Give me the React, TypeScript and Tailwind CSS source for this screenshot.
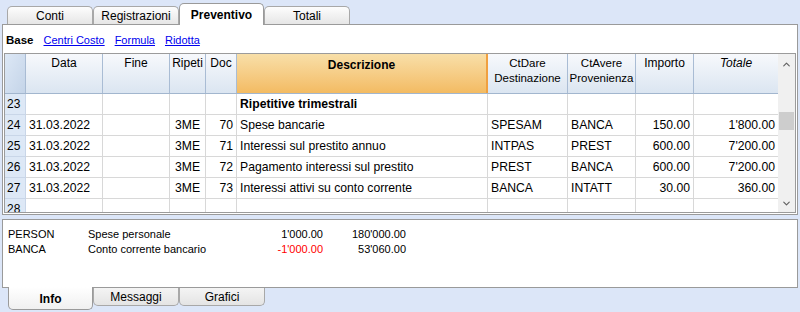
import { ChevronUp, ChevronDown } from 'lucide-react';

const cols = 'grid grid-cols-[21px_77px_67px_36px_31px_251px_80px_68px_58px_85px]';

const rows = [
    { n: '23', data: '', rip: '', doc: '', desc: 'Ripetitive trimestrali', bold: true, dare: '', avere: '', imp: '', tot: '' },
    { n: '24', data: '31.03.2022', rip: '3ME', doc: '70', desc: 'Spese bancarie', dare: 'SPESAM', avere: 'BANCA', imp: '150.00', tot: "1'800.00" },
    { n: '25', data: '31.03.2022', rip: '3ME', doc: '71', desc: 'Interessi sul prestito annuo', dare: 'INTPAS', avere: 'PREST', imp: '600.00', tot: "7'200.00" },
    { n: '26', data: '31.03.2022', rip: '3ME', doc: '72', desc: 'Pagamento interessi sul prestito', dare: 'PREST', avere: 'BANCA', imp: '600.00', tot: "7'200.00" },
    { n: '27', data: '31.03.2022', rip: '3ME', doc: '73', desc: 'Interessi attivi su conto corrente', dare: 'BANCA', avere: 'INTATT', imp: '30.00', tot: '360.00' },
    { n: '28', data: '', rip: '', doc: '', desc: '', dare: '', avere: '', imp: '', tot: '' },
];

function TopTab({ label, active }: { label: string; active?: boolean }) {
    if (active) {
        return (
            <div className="relative z-10 -mb-px h-[22px] w-[85px] rounded-t-[5px] border border-b-0 border-[#9a9a9a] bg-white flex items-center justify-center font-bold text-[12px] text-black">
                {label}
            </div>
        );
    }
    return (
        <div className="h-[18px] w-[86px] rounded-t-[5px] border border-b-0 border-[#a8a8a8] bg-gradient-to-b from-[#fdfdfd] to-[#e6e6e6] flex items-center justify-center text-[12px] text-black">
            {label}
        </div>
    );
}

function BottomTab({ label, active }: { label: string; active?: boolean }) {
    if (active) {
        return (
            <div className="relative z-10 -mt-px h-[23px] w-[85px] rounded-b-[5px] border border-t-0 border-[#9a9a9a] bg-gradient-to-b from-white to-[#f0f0f0] flex items-center justify-center pt-[2px] font-bold text-[12px] text-black">
                {label}
            </div>
        );
    }
    return (
        <div className="h-[18px] w-[86px] rounded-b-[5px] border border-t-0 border-[#a8a8a8] bg-gradient-to-b from-[#f4f4f4] to-[#e4e4e4] flex items-center justify-center text-[12px] text-black">
            {label}
        </div>
    );
}

export default function App() {
    const cell = 'border-r border-b border-[#d8d8d8] px-[3px] flex items-center whitespace-nowrap overflow-hidden';
    const hdr = 'border-r border-[#a9bcd4] flex justify-center text-center pt-[2px] leading-[15px] bg-gradient-to-b from-[#f7f9fc] to-[#dbe5f1]';

    return (
        <div className="w-[800px] h-[312px] bg-[#dce6f8] flex flex-col overflow-hidden font-['Liberation_Sans',Arial,sans-serif] text-black">
            {/* top tabs */}
            <div className="h-[24px] shrink-0 pl-[7px] flex items-end">
                <TopTab label="Conti" />
                <TopTab label="Registrazioni" />
                <TopTab label="Preventivo" active />
                <TopTab label="Totali" />
            </div>

            {/* main panel */}
            <div className="mx-[2px] h-[191px] shrink-0 border border-[#9a9a9a] bg-white flex flex-col">
                <div className="h-[28px] shrink-0 flex items-center pl-[3px] pt-[3px] text-[11px]">
                    <span className="font-bold text-[11.5px]">Base</span>
                    <span className="ml-[10px] text-[#0000ee] underline">Centri Costo</span>
                    <span className="ml-[10px] text-[#0000ee] underline">Formula</span>
                    <span className="ml-[10px] text-[#0000ee] underline">Ridotta</span>
                </div>

                <div className="ml-px mr-px h-[160px] shrink-0 border border-[#9b9b9b] flex overflow-hidden">
                    <div className="flex-1 flex flex-col overflow-hidden">
                        {/* header */}
                        <div className={`${cols} h-[40px] shrink-0 border-b border-[#a2b6ce] text-[12px]`}>
                            <div className="border-r border-[#a9bcd4] bg-gradient-to-br from-[#dde8f6] to-[#c4d4e8]" />
                            <div className={hdr}>Data</div>
                            <div className={hdr}>Fine</div>
                            <div className={hdr}>Ripeti</div>
                            <div className={hdr}>Doc</div>
                            <div className="border-r-2 border-[#f0a040] flex justify-center pt-[2px] font-bold bg-gradient-to-b from-[#f8dfa8] to-[#f3bb62]">
                                Descrizione
                            </div>
                            <div className={`${hdr} text-[11.5px]`}>CtDare<br />Destinazione</div>
                            <div className={`${hdr} text-[11.5px]`}>CtAvere<br />Provenienza</div>
                            <div className={hdr}>Importo</div>
                            <div className={`${hdr} italic`}>Totale</div>
                        </div>

                        {rows.map((r) => (
                            <div key={r.n} className={`${cols} h-[21px] shrink-0 text-[12.2px]`}>
                                <div className="bg-[#dde8f6] border-r border-b border-[#c9d6e8] flex items-center pl-[2px] text-[12px]">{r.n}</div>
                                <div className={cell}>{r.data}</div>
                                <div className={cell}></div>
                                <div className={`${cell} justify-center`}>{r.rip}</div>
                                <div className={`${cell} justify-end`}>{r.doc}</div>
                                <div className={`${cell} ${r.bold ? 'font-bold' : ''}`}>{r.desc}</div>
                                <div className={cell}>{r.dare}</div>
                                <div className={cell}>{r.avere}</div>
                                <div className={`${cell} justify-end`}>{r.imp}</div>
                                <div className={`${cell} justify-end`}>{r.tot}</div>
                            </div>
                        ))}
                    </div>

                    {/* scrollbar */}
                    <div className="w-[17px] shrink-0 bg-[#f0f0f0] flex flex-col items-center">
                        <ChevronUp size={11} strokeWidth={2.5} className="mt-[5px] text-[#606060]" />
                        <div className="mt-[42px] w-[15px] h-[18px] bg-[#cdcdcd]" />
                        <div className="flex-1" />
                        <ChevronDown size={11} strokeWidth={2.5} className="mb-[3px] text-[#606060]" />
                    </div>
                </div>
            </div>

            {/* lower panel */}
            <div className="mt-[4px] mx-[2px] h-[69px] shrink-0 border border-[#9a9a9a] bg-white pt-[7px] text-[11px] leading-[15px]">
                <div className="flex">
                    <span className="w-[85px] pl-[5px]">PERSON</span>
                    <span className="w-[149px]">Spese personale</span>
                    <span className="w-[86px] text-right">1'000.00</span>
                    <span className="w-[83px] text-right">180'000.00</span>
                </div>
                <div className="flex">
                    <span className="w-[85px] pl-[5px]">BANCA</span>
                    <span className="w-[149px]">Conto corrente bancario</span>
                    <span className="w-[86px] text-right text-[#ff0000]">-1'000.00</span>
                    <span className="w-[83px] text-right">53'060.00</span>
                </div>
            </div>

            {/* bottom tabs */}
            <div className="pl-[8px] flex items-start">
                <BottomTab label="Info" active />
                <BottomTab label="Messaggi" />
                <BottomTab label="Grafici" />
            </div>
        </div>
    );
}
